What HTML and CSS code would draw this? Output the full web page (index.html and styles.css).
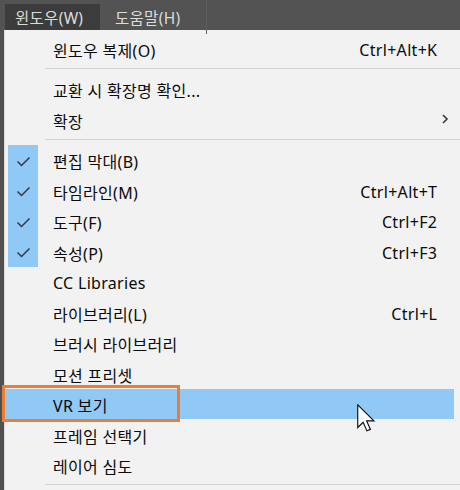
FILE: index.html
```html
<!DOCTYPE html>
<html lang="ko">
<head>
<meta charset="utf-8">
<link rel="stylesheet" href="styles.css">
</head>
<body>
<div class="app">
  <div class="menubar">
    <div class="tab active">윈도우(W)</div>
    <div class="tab">도움말(H)</div>
    <div class="bar-divider"></div>
  </div>
  <div class="menu">
    <div class="row"><span class="check"></span><span class="label">윈도우 복제(O)</span><span class="key">Ctrl+Alt+K</span><span class="arrow"></span></div>
    <div class="sep"></div>
    <div class="row"><span class="check"></span><span class="label">교환 시 확장명 확인...</span><span class="key"></span><span class="arrow"></span></div>
    <div class="row"><span class="check"></span><span class="label">확장</span><span class="key"></span><span class="arrow"><svg width="8" height="10" viewBox="0 0 8 10"><polyline points="2,1 6,5 2,9" fill="none" stroke="#3a3a3a" stroke-width="1.6"/></svg></span></div>
    <div class="sep"></div>
    <div class="row"><span class="check on"><svg width="30" height="30" viewBox="0 0 30 30"><polyline points="9.5,16.5 13.5,20.5 21.5,12.5" fill="none" stroke="#2f3a45" stroke-width="1.5"/></svg></span><span class="label">편집 막대(B)</span><span class="key"></span><span class="arrow"></span></div>
    <div class="row"><span class="check on"><svg width="30" height="30" viewBox="0 0 30 30"><polyline points="9.5,16.5 13.5,20.5 21.5,12.5" fill="none" stroke="#2f3a45" stroke-width="1.5"/></svg></span><span class="label">타임라인(M)</span><span class="key">Ctrl+Alt+T</span><span class="arrow"></span></div>
    <div class="row"><span class="check on"><svg width="30" height="30" viewBox="0 0 30 30"><polyline points="9.5,16.5 13.5,20.5 21.5,12.5" fill="none" stroke="#2f3a45" stroke-width="1.5"/></svg></span><span class="label">도구(F)</span><span class="key">Ctrl+F2</span><span class="arrow"></span></div>
    <div class="row"><span class="check on"><svg width="30" height="30" viewBox="0 0 30 30"><polyline points="9.5,16.5 13.5,20.5 21.5,12.5" fill="none" stroke="#2f3a45" stroke-width="1.5"/></svg></span><span class="label">속성(P)</span><span class="key">Ctrl+F3</span><span class="arrow"></span></div>
    <div class="row"><span class="check"></span><span class="label">CC Libraries</span><span class="key"></span><span class="arrow"></span></div>
    <div class="row"><span class="check"></span><span class="label">라이브러리(L)</span><span class="key">Ctrl+L</span><span class="arrow"></span></div>
    <div class="row"><span class="check"></span><span class="label">브러시 라이브러리</span><span class="key"></span><span class="arrow"></span></div>
    <div class="row"><span class="check"></span><span class="label">모션 프리셋</span><span class="key"></span><span class="arrow"></span></div>
    <div class="row hover"><span class="check"></span><span class="label">VR 보기</span><span class="key"></span><span class="arrow"></span>
      <span class="callout"></span>
      <svg class="cursor" width="19" height="28" viewBox="0 0 13 19"><path d="M0.5,0.5 L0.5,16 L4.2,12.4 L6.8,18.3 L9.2,17.3 L6.6,11.5 L11.6,11.5 Z" fill="#fff" stroke="#111" stroke-width="0.8" stroke-linejoin="miter"/></svg>
    </div>
    <div class="row"><span class="check"></span><span class="label">프레임 선택기</span><span class="key"></span><span class="arrow"></span></div>
    <div class="row"><span class="check"></span><span class="label">레이어 심도</span><span class="key"></span><span class="arrow"></span></div>
    <div class="sep"></div>
  </div>
</div>
</body>
</html>
```

FILE: styles.css
```css
html, body {
  margin: 0;
  padding: 0;
  background: #505050;
  overflow: hidden;
}

.app {
  width: 460px;
  height: 490px;
  display: flex;
  flex-direction: column;
  font-family: "Noto Sans", "Noto Sans CJK KR", sans-serif;
  letter-spacing: 0.3px;
}

.menubar {
  height: 34px;
  display: flex;
  align-items: flex-end;
  padding-left: 5px;
  gap: 5px;
  background: #535353;
  position: relative;
}

.tab {
  height: 26px;
  padding: 3px 8px 0 10px;
  line-height: 23px;
  color: #dcdcdc;
  font-size: 15.5px;
  box-sizing: border-box;
  white-space: nowrap;
}

.tab.active {
  background: #3c3c3c;
  width: 95px;
}

.bar-divider {
  position: absolute;
  left: 206px;
  top: 0;
  width: 1px;
  height: 34px;
  background: #5e5e5e;
}

.menu {
  margin-left: 4px;
  flex: 1;
  background: #f2f2f2;
  border-left: 1px solid #dcdcdc;
  padding: 3px 6px 0 0;
  display: flex;
  flex-direction: column;
}

.row {
  height: 30.5px;
  display: flex;
  align-items: center;
  position: relative;
  color: #0a0a0a;
  font-size: 16px;
  flex-shrink: 0;
}

.row.hover {
  background: #90c8f6;
}

.check {
  width: 30px;
  height: 100%;
  margin-left: 3px;
  display: flex;
  align-items: center;
  justify-content: center;
}

.check.on {
  background: #90c8f6;
}

.check svg {
  display: block;
}

.label {
  flex: 1;
  padding-left: 15px;
  padding-top: 3px;
  white-space: nowrap;
}

.key {
  white-space: nowrap;
  padding-top: 3px;
  margin-right: -0.3px;
}

.arrow {
  width: 17px;
  display: flex;
  align-items: center;
  padding-left: 4px;
  box-sizing: border-box;
}

.arrow svg {
  display: block;
}

.sep {
  height: 10px;
  flex-shrink: 0;
  display: flex;
  align-items: flex-start;
  margin-left: 40px;
  margin-right: -6px;
}

.sep::before {
  content: "";
  display: block;
  width: 100%;
  height: 1px;
  margin-top: 4px;
  background: #d2d2d2;
}

.callout {
  position: absolute;
  left: -3px;
  top: -4px;
  width: 178px;
  height: 37px;
  border: 3px solid #ee7d31;
  box-sizing: border-box;
}

.cursor {
  position: absolute;
  left: 352px;
  top: 15px;
}
```
